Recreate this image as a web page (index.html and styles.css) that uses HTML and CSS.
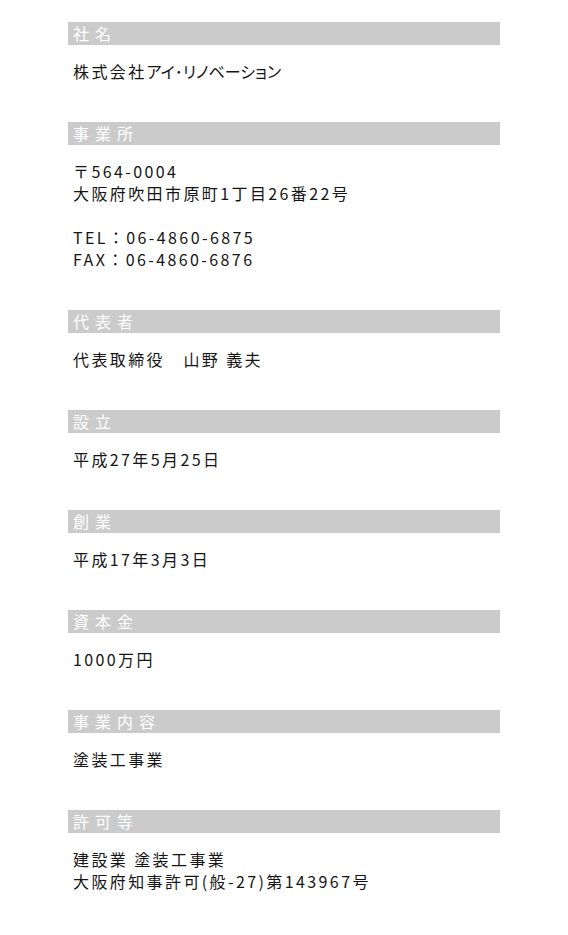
FILE: index.html
```html
<!DOCTYPE html>
<html lang="ja">
<head>
<meta charset="utf-8">
<title>会社概要</title>
<link rel="stylesheet" href="styles.css">
</head>
<body>
<div class="profile">
  <section class="item">
    <h3 class="label">社名</h3>
    <p class="value">株式会社<span class="kana">アイ･リノベーション</span></p>
  </section>
  <section class="item">
    <h3 class="label">事業所</h3>
    <p class="value">〒564-0004<br>大阪府吹田市原町1丁目26番22号<br><br>TEL：06-4860-6875<br>FAX：06-4860-6876</p>
  </section>
  <section class="item">
    <h3 class="label">代表者</h3>
    <p class="value">代表取締役　山野 義夫</p>
  </section>
  <section class="item">
    <h3 class="label">設立</h3>
    <p class="value">平成27年5月25日</p>
  </section>
  <section class="item">
    <h3 class="label">創業</h3>
    <p class="value">平成17年3月3日</p>
  </section>
  <section class="item">
    <h3 class="label">資本金</h3>
    <p class="value">1000万円</p>
  </section>
  <section class="item">
    <h3 class="label">事業内容</h3>
    <p class="value">塗装工事業</p>
  </section>
  <section class="item">
    <h3 class="label">許可等</h3>
    <p class="value">建設業 塗装工事業<br>大阪府知事許可(般-27)第143967号</p>
  </section>
</div>
</body>
</html>
```

FILE: styles.css
```css
html, body {
  margin: 0;
  padding: 0;
  background: #ffffff;
}
body {
  font-family: "Noto Sans CJK JP", "Noto Sans", sans-serif;
  color: #151515;
}
.profile {
  width: 432px;
  margin-left: 68px;
  padding-top: 22px;
  display: flex;
  flex-direction: column;
  gap: 40px;
}
.item {
  display: flex;
  flex-direction: column;
}
.label {
  margin: 0;
  height: 23px;
  line-height: 23px;
  background: #cccbcb;
  color: #ffffff;
  font-size: 16px;
  font-weight: normal;
  letter-spacing: 6px;
  padding-left: 5px;
}
.value {
  margin: 15px 0 0 0;
  padding-left: 5px;
  font-size: 16px;
  line-height: 22px;
  letter-spacing: 2.4px;
}
.kana {
  font-feature-settings: "palt";
  letter-spacing: 0;
}
```
